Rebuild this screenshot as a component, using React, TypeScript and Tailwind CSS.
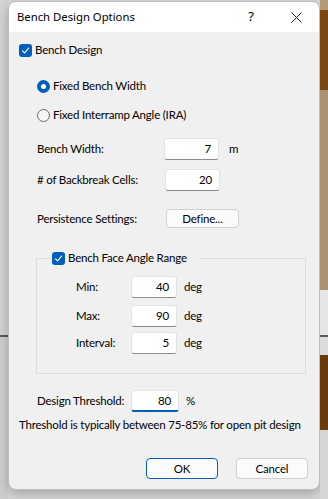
import React from "react";

const font = { fontFamily: 'Lato, "Noto Sans", Arial, sans-serif' };
const titleFont = { fontFamily: '"Noto Sans", Arial, sans-serif' };

function CheckBox() {
  return (
    <span className="w-[13px] h-[13px] rounded-[3px] bg-[#005fb8] flex items-center justify-center shrink-0">
      <svg width="9" height="9" viewBox="0 0 9 9" fill="none">
        <path d="M1.5 4.8 L3.6 6.8 L7.6 2.2" stroke="white" strokeWidth="1.1" strokeLinecap="round" strokeLinejoin="round" />
      </svg>
    </span>
  );
}

function Radio({ checked }: { checked?: boolean }) {
  if (checked) {
    return (
      <span className="w-[13px] h-[13px] rounded-full bg-[#005fb8] flex items-center justify-center shrink-0">
        <span className="w-[5px] h-[5px] rounded-full bg-white" />
      </span>
    );
  }
  return <span className="w-[13px] h-[13px] rounded-full border border-[#6b6b6b] bg-[#f5f5f5] shrink-0" />;
}

function Field({ value, w = "w-[55px]", focused }: { value: string; w?: string; focused?: boolean }) {
  return (
    <div
      className={`${w} h-[22px] bg-white rounded-[3px] border border-[#e3e3e3] flex items-center justify-end pr-[7px] text-black ${
        focused ? "border-b-2 border-b-[#005fb8]" : "border-b-[#8d8d8d]"
      }`}
    >
      {value}
    </div>
  );
}

function Btn({ label, primary, w = "w-[72px]", h = "h-[21px]" }: { label: string; primary?: boolean; w?: string; h?: string }) {
  return (
    <div
      className={`${w} ${h} rounded-[4px] bg-[#fbfbfb] border flex items-center justify-center text-black ${
        primary ? "border-[#005fb8]" : "border-[#d0d0d0]"
      }`}
    >
      {label}
    </div>
  );
}

export default function App() {
  return (
    <div className="w-[328px] h-[499px] flex overflow-hidden bg-[#d9d9d9] text-[11.5px] tracking-[-0.2px] whitespace-nowrap" style={font}>
      {/* desktop left */}
      <div className="w-[8px] flex flex-col shrink-0">
        <div className="h-[335px] bg-[#d4d4d4]" />
        <div className="h-[2px] bg-[#5a5a5a]" />
        <div className="flex-1 bg-[#cfcfcf]" />
      </div>

      {/* dialog */}
      <div className="w-[312px] h-[489px] mt-[1px] rounded-[8px] overflow-hidden bg-[#f0f0f0] border border-[#bdbdbd] shadow-[0_4px_12px_rgba(0,0,0,0.25)] flex flex-col shrink-0">
        <div className="h-[30px] bg-white flex items-center shrink-0 tracking-normal" style={titleFont}>
          <span className="pl-[8px] text-[11.3px] text-black">Bench Design Options</span>
          <span className="ml-auto text-[13px] text-black mr-[37px]">?</span>
          <svg className="mr-[17px]" width="11" height="11" viewBox="0 0 11 11">
            <path d="M0.5 0.5 L10.5 10.5 M10.5 0.5 L0.5 10.5" stroke="#1a1a1a" strokeWidth="1" />
          </svg>
        </div>

        <div className="flex flex-col text-black">
          <div className="mt-[10px] h-[16px] ml-[10px] flex items-center gap-[3px]">
            <CheckBox />
            <span>Bench Design</span>
          </div>

          <div className="mt-[20px] h-[16px] ml-[28px] flex items-center gap-[3px]">
            <Radio checked />
            <span>Fixed Bench Width</span>
          </div>
          <div className="mt-[13px] h-[16px] ml-[28px] flex items-center gap-[3px]">
            <Radio />
            <span>Fixed Interramp Angle (IRA)</span>
          </div>

          <div className="mt-[15px] h-[22px] ml-[28px] flex items-center">
            <span className="w-[127px]">Bench Width:</span>
            <Field value="7" />
            <span className="ml-[10px]">m</span>
          </div>
          <div className="mt-[8px] h-[23px] ml-[28px] flex items-center">
            <span className="w-[128px]">&#35; of Backbreak Cells:</span>
            <Field value="20" />
          </div>

          <div className="mt-[18px] h-[19px] ml-[28px] flex items-center">
            <span className="w-[129px]">Persistence Settings:</span>
            <Btn label="Define..." w="w-[73px]" h="h-[19px]" />
          </div>

          {/* group box */}
          <div className="mt-[23px] ml-[27px] w-[270px] h-[123px] flex flex-col">
            <div className="h-[14px] flex items-center">
              <div className="w-[16px] h-[7px] mt-[7px] border-t border-l border-[#dcdcdc]" />
              <div className="flex items-center gap-[3px]">
                <CheckBox />
                <span>Bench Face Angle Range</span>
              </div>
              <div className="flex-1 h-[7px] mt-[7px] ml-[12px] border-t border-r border-[#dcdcdc]" />
            </div>
            <div className="flex-1 border-l border-r border-b border-[#dcdcdc] flex flex-col pl-[39px]">
              <div className="mt-[11px] h-[22px] flex items-center">
                <span className="w-[55px]">Min:</span>
                <Field value="40" w="w-[46px]" />
                <span className="ml-[7px]">deg</span>
              </div>
              <div className="mt-[7px] h-[22px] flex items-center">
                <span className="w-[55px]">Max:</span>
                <Field value="90" w="w-[46px]" />
                <span className="ml-[7px]">deg</span>
              </div>
              <div className="mt-[5px] h-[22px] flex items-center">
                <span className="w-[55px]">Interval:</span>
                <Field value="5" w="w-[46px]" />
                <span className="ml-[7px]">deg</span>
              </div>
            </div>
          </div>

          <div className="mt-[16px] h-[22px] ml-[28px] flex items-center">
            <span className="w-[94px]">Design Threshold:</span>
            <Field value="80" w="w-[48px]" focused />
            <span className="ml-[7px]">%</span>
          </div>

          <div className="mt-[5px] ml-[10px] h-[16px] flex items-center">
            Threshold is typically between 75-85% for open pit design
          </div>

          <div className="mt-[25px] flex justify-end gap-[18px] pr-[11px]">
            <Btn label="OK" primary />
            <Btn label="Cancel" />
          </div>
        </div>
      </div>

      {/* desktop right */}
      <div className="flex-1 flex flex-col">
        <div className="h-[10px] bg-[#b49a78]" />
        <div className="h-[80px] bg-[#7c4612]" />
        <div className="h-[200px] bg-[#ab9172]" />
        <div className="h-[45px] bg-[#e6e6e6]" />
        <div className="h-[2px] bg-[#5a5a5a]" />
        <div className="h-[18px] bg-[#dcdcdc]" />
        <div className="h-[75px] bg-[#6a3a0c]" />
        <div className="flex-1 bg-[#d6d6d6]" />
      </div>
    </div>
  );
}
